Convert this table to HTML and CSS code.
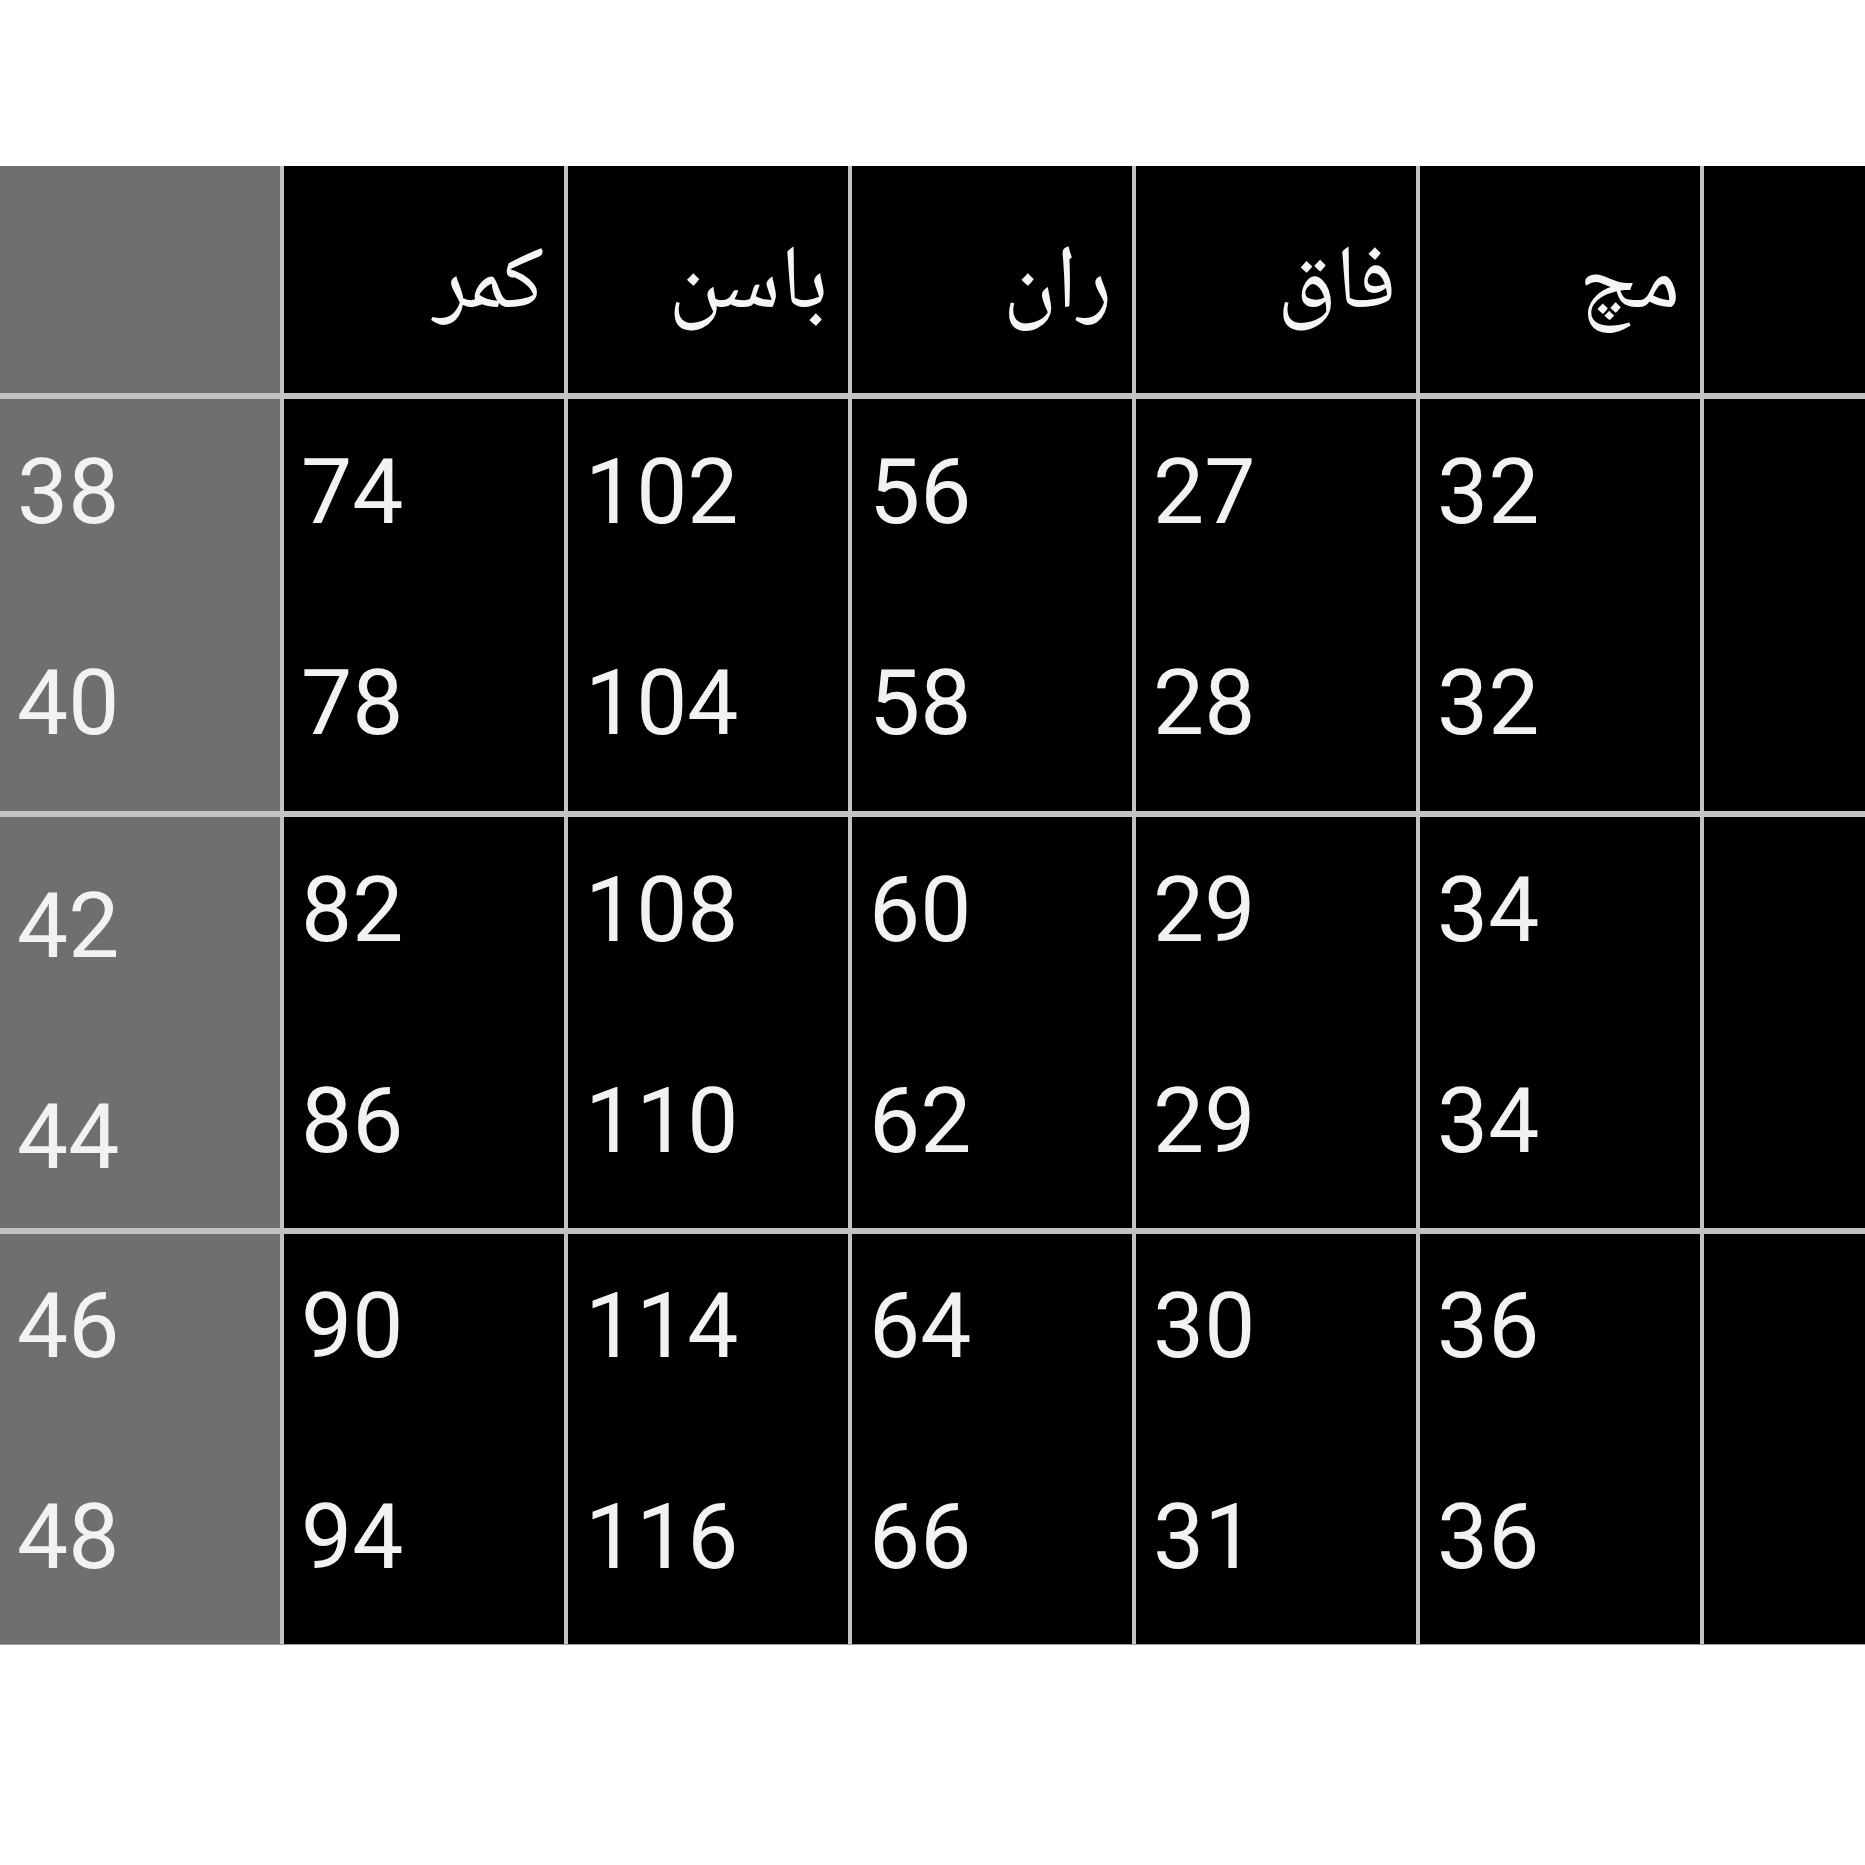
FILE: index.html
```html
<!DOCTYPE html>
<html lang="fa">
<head>
<meta charset="utf-8">
<title>جدول سایز</title>
<link rel="stylesheet" href="styles.css">
</head>
<body>
<div class="page">
  <div class="table">
    <div class="cell side head"></div>
    <div class="cell head"><span class="label">کمر</span></div>
    <div class="cell head"><span class="label">باسن</span></div>
    <div class="cell head"><span class="label">ران</span></div>
    <div class="cell head"><span class="label">فاق</span></div>
    <div class="cell head"><span class="label">مچ</span></div>
    <div class="cell head"></div>

    <div class="cell side group"><span>38</span><span>40</span></div>
    <div class="cell group"><span>74</span><span>78</span></div>
    <div class="cell group"><span>102</span><span>104</span></div>
    <div class="cell group"><span>56</span><span>58</span></div>
    <div class="cell group"><span>27</span><span>28</span></div>
    <div class="cell group"><span>32</span><span>32</span></div>
    <div class="cell group"></div>

    <div class="cell side group low"><span>42</span><span>44</span></div>
    <div class="cell group"><span>82</span><span>86</span></div>
    <div class="cell group"><span>108</span><span>110</span></div>
    <div class="cell group"><span>60</span><span>62</span></div>
    <div class="cell group"><span>29</span><span>29</span></div>
    <div class="cell group"><span>34</span><span>34</span></div>
    <div class="cell group"></div>

    <div class="cell side group"><span>46</span><span>48</span></div>
    <div class="cell group"><span>90</span><span>94</span></div>
    <div class="cell group"><span>114</span><span>116</span></div>
    <div class="cell group"><span>64</span><span>66</span></div>
    <div class="cell group"><span>30</span><span>31</span></div>
    <div class="cell group"><span>36</span><span>36</span></div>
    <div class="cell group"></div>
  </div>
</div>
</body>
</html>
```
FILE: styles.css
```css
html, body {
  margin: 0;
  padding: 0;
  background: #ffffff;
}

.page {
  width: 1865px;
  height: 1865px;
  padding-top: 166px;
  box-sizing: border-box;
}

.table {
  display: grid;
  grid-template-columns: 280px repeat(5, 280px) 1fr;
  grid-template-rows: 227px 412px 411px 410px;
  column-gap: 4px;
  row-gap: 6px;
  background: #c2c2c2;
  border-bottom: 1px solid #a0a0a0;
}

.cell {
  background: #000000;
  color: #f2f2f2;
  font-family: Roboto, "Liberation Sans", sans-serif;
  font-size: 91px;
  overflow: hidden;
}

.side {
  background: #6f6f6f;
}

.head {
  display: flex;
  align-items: center;
  justify-content: flex-end;
  padding-right: 20px;
  padding-top: 16px;
}

.label {
  direction: rtl;
  font-family: "Noto Naskh Arabic", "Noto Sans Arabic", "DejaVu Sans", sans-serif;
  font-size: 90px;
  line-height: 1;
  color: #f5f5f5;
}

.group {
  display: flex;
  flex-direction: column;
  justify-content: center;
  padding-left: 17px;
  padding-bottom: 14px;
  line-height: 211px;
}

.group.low {
  padding-bottom: 0;
  padding-top: 18px;
}
```
